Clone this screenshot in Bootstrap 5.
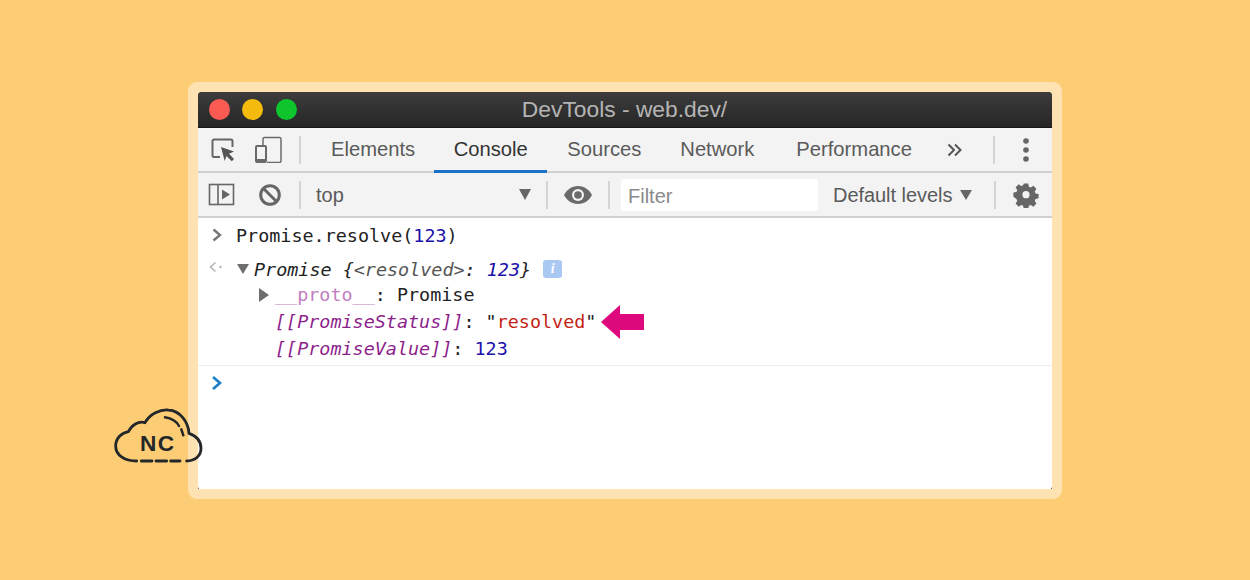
<!DOCTYPE html>
<html lang="en">
<head>
<meta charset="utf-8">
<title>DevTools - web.dev/</title>
<link href="https://cdn.jsdelivr.net/npm/bootstrap@5.3.0/dist/css/bootstrap.min.css" rel="stylesheet">
<style>
html,body{height:100%;margin:0}
body{background:#fdcd76;font-family:"Liberation Sans",Arial,sans-serif;overflow:hidden}
.stage{width:1250px;height:580px;padding:82px 188px 81px;position:relative}
.frame{background:#fee2b1;border-radius:9px;padding:10px;height:417px}
.win{background:#333;border-radius:4px 4px 0 0;height:397px;overflow:hidden}
.titlebar{height:36px;background:linear-gradient(#3c3c3c,#262626);border-bottom:1px solid #151515;position:relative}
.titletext{color:#b4b4b4;font-size:22.8px;line-height:35px;width:100%;text-align:center;padding-right:1px}
.dot{width:21px;height:21px;border-radius:50%;display:block;position:absolute;top:7px}
.d1{left:11px;background:#fb5b52}.d2{left:44px;background:#f4bb0c}.d3{left:78px;background:#0ec52c}
.bar{background:#f3f3f3;border-bottom:2px solid #d0d0d0;height:45px}
.bar2{height:45px}
.sep{width:2px;height:28px;background:#d4d4d4;flex:none}
.tab{font-size:20.2px;color:#5a5a5a;padding:0 20px;height:44px;line-height:43px;position:relative}
.tab.act{color:#333;padding:0 19.500px}
.tab.act:after{content:"";position:absolute;left:0;right:0;bottom:-1px;height:3px;background:#1a73c8}
.toptext{font-size:20px;color:#5a5a5a}
.filterbox{width:197px;height:32px;background:#fff;border-radius:2px;color:#8a8a8a;font-size:20px;line-height:35px;padding-left:7px}
.cons{background:#fff;height:272px;border-radius:0 0 4px 4px;font-family:"DejaVu Sans Mono","Liberation Mono",monospace;font-size:18.42px;color:#222}
.ln{height:27px;line-height:27px;white-space:pre;display:flex;align-items:center}
.l1{height:36px;padding-left:14px;padding-bottom:2px}
.l2{height:27px;padding-left:11px;padding-top:3px}
.l3{padding-left:61px}
.l4,.l5{padding-left:77px}
.ital{font-style:italic}
.num{color:#1c10a8}
.pur{color:#8d1f8c}
.pale{color:#c27fc0}
.str{color:#c41f16}
.gry{color:#555}
.info{width:19px;height:18px;background:#a9c9f3;border-radius:3px;color:#fff;font:italic bold 14px/18px "Liberation Serif",serif;text-align:center;margin-left:12px}
.rule{border-top:1px solid #ececec;margin-top:3px;height:34px;padding-left:13px;padding-top:9px}
.logo{position:absolute;left:105px;top:400px;width:110px;height:105px}
.logotxt{font:bold 68px "Liberation Sans",Arial,sans-serif;letter-spacing:4px;fill:#23272a}
</style>
</head>
<body>
<div class="stage">
  <div class="frame">
    <div class="win">
      <div class="titlebar">
        <span class="dot d1"></span><span class="dot d2"></span><span class="dot d3"></span>
        <div class="titletext">DevTools - web.dev/</div>
      </div>
      <div class="bar d-flex align-items-center">
        <svg class="flex-none" style="margin-left:13px" width="25" height="25" viewBox="0 0 25 25"><path d="M9 20H3a1.500 1.500 0 0 1-1.500-1.500V4A1.500 1.500 0 0 1 3 2.500h17A1.500 1.500 0 0 1 21.500 4v6" fill="none" stroke="#666" stroke-width="2"/><path d="M10 10l13 4.500-5 2.200 5 5.300-2.200 2.200-5.300-5.300-1.800 5z" fill="#555"/></svg>
        <svg style="margin-left:18px" width="28" height="27" viewBox="0 0 28 27"><path d="M9 9V3a1.500 1.500 0 0 1 1.500-1.500h15A1.500 1.500 0 0 1 27 3v22a1.500 1.500 0 0 1-1.500 1.500H13" fill="none" stroke="#6a6a6a" stroke-width="1.500"/><rect x="2" y="10" width="10" height="16" rx="1" fill="none" stroke="#6a6a6a" stroke-width="2"/><rect x="2" y="23" width="10" height="3" fill="#6a6a6a"/></svg>
        <span class="sep" style="margin-left:17px"></span>
        <div class="tab" style="margin-left:10px;padding-right:19px">Elements</div>
        <div class="tab act">Console</div>
        <div class="tab">Sources</div>
        <div class="tab" style="padding-left:19px;padding-right:22px">Network</div>
        <div class="tab">Performance</div>
        <svg style="margin-left:15px" width="16" height="14" viewBox="0 0 16 14"><path d="M1.500 1.500L7 7l-5.500 5.500M8 1.500L13.500 7 8 12.500" fill="none" stroke="#555" stroke-width="2"/></svg>
        <span class="sep" style="margin-left:30px"></span>
        <svg style="margin-left:27px" width="8" height="26" viewBox="0 0 8 26"><circle cx="4" cy="4" r="2.800" fill="#666"/><circle cx="4" cy="13" r="2.800" fill="#666"/><circle cx="4" cy="22" r="2.800" fill="#666"/></svg>
      </div>
      <div class="bar bar2 d-flex align-items-center">
        <svg style="margin-left:10px" width="27" height="23" viewBox="0 0 27 23"><rect x="1.500" y="1.500" width="24" height="20" fill="none" stroke="#666" stroke-width="1.600"/><path d="M10 1.500v20" stroke="#666" stroke-width="1.600"/><path d="M14 6.500l8 5-8 5z" fill="#666"/></svg>
        <svg style="margin-left:23px" width="24" height="24" viewBox="0 0 24 24"><circle cx="12" cy="12" r="9.300" fill="none" stroke="#666" stroke-width="3"/><path d="M5.500 5.500l13 13" stroke="#666" stroke-width="3"/></svg>
        <span class="sep" style="margin-left:17px"></span>
        <div class="toptext" style="margin-left:15px;width:201px">top</div>
        <svg style="margin-left:1px" width="14" height="11" viewBox="0 0 14 11"><path d="M1 0h12L7 11z" fill="#666"/></svg>
        <span class="sep" style="margin-left:14px"></span>
        <svg style="margin-left:16px" width="28" height="18" viewBox="0 0 28 18"><path d="M14 0C7.500 0 2.500 4 0 9c2.500 5 7.500 9 14 9s11.500-4 14-9c-2.500-5-7.500-9-14-9z" fill="#6a6a6a"/><circle cx="14" cy="9" r="6" fill="#f3f3f3"/><circle cx="14" cy="9" r="3.800" fill="#6a6a6a"/></svg>
        <span class="sep" style="margin-left:16px"></span>
        <div class="filterbox" style="margin-left:11px">Filter</div>
        <div class="toptext" style="margin-left:15px;letter-spacing:-.05px">Default levels</div>
        <svg style="margin-left:8px" width="12" height="10" viewBox="0 0 12 10"><path d="M0 0h12L6 10z" fill="#666"/></svg>
        <span class="sep" style="margin-left:22px"></span>
        <svg style="margin-left:17px" width="26" height="26" viewBox="0 0 26 26"><path fill="#666" fill-rule="evenodd" d="M10.500 1h5l.7 3.400 2 .9 3-1.900 3.400 3.500-1.900 2.900.9 2.100 3.400.7v4.800l-3.400.7-.9 2.100 1.900 2.900-3.400 3.500-3-1.900-2 .9-.7 3.400h-5l-.7-3.400-2-.9-3 1.900-3.400-3.500 1.900-2.900-.9-2.100L-1 15.700v-4.800l3.400-.7.9-2.100L1.400 5.200l3.400-3.500 3 1.900 2-.9zM13 9.300a4 4 0 1 0 0 8 4 4 0 0 0 0-8z" transform="translate(1.300 .7) scale(.9)"/></svg>
      </div>
      <div class="cons">
        <div class="ln l1">
          <svg width="10" height="14" viewBox="0 0 10 14" style="margin-right:14px"><path d="M1.500 1.500L8 7l-6.500 5.500" fill="none" stroke="#777" stroke-width="2.400"/></svg><span>Promise.resolve(<span class="num">123</span>)</span>
        </div>
        <div class="ln l2">
          <svg width="14" height="12" viewBox="0 0 14 12" style="margin-right:14px;margin-top:-5px"><path d="M6.500 1.500L1.500 6l5 4.500" fill="none" stroke="#b5b5b5" stroke-width="1.600"/><circle cx="11.500" cy="6" r="1.200" fill="#b5b5b5"/></svg><svg width="12" height="10" viewBox="0 0 12 10" style="margin-right:5px"><path d="M0 0h12L6 10z" fill="#6e6e6e"/></svg><span class="ital">Promise {<span class="gry">&lt;resolved&gt;</span>: <span class="num">123</span>}</span><span class="info">i</span>
        </div>
        <div class="ln l3">
          <svg width="10" height="14" viewBox="0 0 10 14" style="margin-right:6px"><path d="M0 0l10 7-10 7z" fill="#6e6e6e"/></svg><span><span class="pale">__proto__</span>: Promise</span>
        </div>
        <div class="ln l4">
          <span><span class="pur ital">[[PromiseStatus]]</span>: "<span class="str">resolved</span>"</span>
          <svg width="43" height="34" viewBox="0 0 43 34" style="margin-left:5px"><path d="M0 17L19 0v9h24v16H19v9z" fill="#de0a7d"/></svg>
        </div>
        <div class="ln l5">
          <span><span class="pur ital">[[PromiseValue]]</span>: <span class="num">123</span></span>
        </div>
        <div class="rule">
          <svg class="d-block" width="12" height="16" viewBox="0 0 12 16"><path d="M2 2l7 6-7 6" fill="none" stroke="#1a7ec8" stroke-width="2.600"/></svg>
        </div>
      </div>
    </div>
  </div>
  <svg class="logo" viewBox="0 0 330 315">
    <path d="M95 183C58 183 32 165 32 138 32 115 50 98 70 95 80 75 100 62 120 68 135 42 165 28 190 30 225 32 250 65 252 100 275 108 288 125 288 145 288 168 270 183 245 183" fill="none" stroke="#23272a" stroke-width="8.500" stroke-linecap="round"/>
    <path d="M109 183h32M153 183h32M197 183h28" fill="none" stroke="#23272a" stroke-width="8.500" stroke-linecap="round"/>
    <path d="M180 52C200 55 215 65 222 78M229 88L235 106" fill="none" stroke="#23272a" stroke-width="7.500" stroke-linecap="round"/>
    <text class="logotxt" x="105" y="154">NC</text>
  </svg>
</div>
</body>
</html>
